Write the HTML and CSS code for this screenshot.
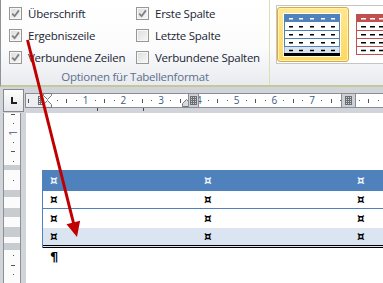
FILE: index.html
```html
<!DOCTYPE html>
<html lang="de">
<head>
    <meta charset="UTF-8">
    <meta name="viewport" content="width=device-width, initial-scale=1.0">
    <title>Optionen für Tabellenformat</title>
    <link rel="stylesheet" href="styles.css">
</head>
<body>
    <div class="window">
        <!-- ribbon: table style options + style gallery -->
        <div class="ribbon">
            <div class="group options">
                <div class="checks">
                    <label class="check"><span class="box"><svg viewBox="0 0 11 11"><path d="M2.2 5.6 L4.6 8.2 L8.9 2.4"/></svg></span>Überschrift</label>
                    <label class="check"><span class="box"><svg viewBox="0 0 11 11"><path d="M2.2 5.6 L4.6 8.2 L8.9 2.4"/></svg></span>Erste Spalte</label>
                    <label class="check"><span class="box"><svg viewBox="0 0 11 11"><path d="M2.2 5.6 L4.6 8.2 L8.9 2.4"/></svg></span>Ergebniszeile</label>
                    <label class="check"><span class="box"></span>Letzte Spalte</label>
                    <label class="check"><span class="box"><svg viewBox="0 0 11 11"><path d="M2.2 5.6 L4.6 8.2 L8.9 2.4"/></svg></span>Verbundene Zeilen</label>
                    <label class="check"><span class="box"></span>Verbundene Spalten</label>
                </div>
                <div class="group-label">Optionen für Tabellenformat</div>
            </div>
            <div class="group styles">
                <div class="gallery">
                    <div class="style-item selected">
                        <svg class="tstyle" width="56" height="42" viewBox="0 0 56 42">
                            <rect x="0.5" y="0.5" width="55" height="41" fill="#fff" stroke="#4f81bd"/>
                            <rect x="0" y="0" width="56" height="8" fill="#4f81bd"/>
                            <rect x="0.5" y="33" width="55" height="6" fill="#dbe5f1"/>
                            <rect x="0" y="39" width="56" height="3" fill="#000"/>
                            <path d="M0 16.5H56M0 24.5H56M0 32.5H56" stroke="#4f81bd"/>
                            <path d="M5 4.8h4M15 4.8h4M26 4.8h4M37 4.8h4M47 4.8h4" stroke="#fff" stroke-width="1.5"/>
                            <path d="M5 12.7h4M15 12.7h4M26 12.7h4M37 12.7h4M47 12.7h4M5 20.7h4M15 20.7h4M26 20.7h4M37 20.7h4M47 20.7h4M5 28.7h4M15 28.7h4M26 28.7h4M37 28.7h4M47 28.7h4M5 36.5h4M15 36.5h4M26 36.5h4M37 36.5h4M47 36.5h4" stroke="#000" stroke-width="1.6"/>
                        </svg>
                    </div>
                    <div class="style-item">
                        <svg class="tstyle" width="56" height="42" viewBox="0 0 56 42">
                            <rect x="0.5" y="0.5" width="55" height="40" fill="#fff" stroke="#c0504d"/>
                            <rect x="0" y="0" width="56" height="8" fill="#c0504d"/>
                            <path d="M0 16.5H56M0 24.5H56M0 32.5H56" stroke="#c0504d"/>
                            <path d="M5 4.8h5M14 4.8h5M23 4.8h5M32 4.8h5M41 4.8h5" stroke="#fff" stroke-width="1.5"/>
                            <path d="M5 12.7h5M14 12.7h5M23 12.7h5M32 12.7h5M41 12.7h5M5 20.7h5M14 20.7h5M23 20.7h5M32 20.7h5M41 20.7h5M5 28.7h5M14 28.7h5M23 28.7h5M32 28.7h5M41 28.7h5M5 36.5h5M14 36.5h5M23 36.5h5M32 36.5h5M41 36.5h5" stroke="#000" stroke-width="1.6"/>
                        </svg>
                    </div>
                </div>
            </div>
        </div>

        <!-- horizontal ruler -->
        <div class="ruler-bar">
            <div class="tab-box"><span class="tab-l"></span></div>
            <div class="hruler">
                <div class="hmargin"><span class="half"></span><span class="grid small"></span></div>
                <div class="scale">
                    <span class="t"></span><span class="t dot"></span><span class="t half"></span><span class="t dot"></span>
                    <span class="t">1</span><span class="t dot"></span><span class="t half"></span><span class="t dot"></span>
                    <span class="t">2</span><span class="t dot"></span><span class="t half"></span><span class="t dot"></span>
                    <span class="t">3</span><span class="t dot"></span><span class="t half"></span><span class="t dot"></span>
                    <span class="t">4</span><span class="t dot"></span><span class="t half"></span><span class="t dot"></span>
                    <span class="t">5</span><span class="t dot"></span><span class="t half"></span><span class="t dot"></span>
                    <span class="t">6</span><span class="t dot"></span><span class="t half"></span><span class="t dot"></span>
                    <span class="t">7</span><span class="t dot"></span><span class="t half"></span><span class="t dot"></span>
                    <span class="t">8</span><span class="t dot"></span><span class="t half"></span><span class="t dot"></span>
                </div>
                <svg class="indent" width="9" height="15" viewBox="0 0 9 15">
                    <path d="M0.5 0.5H8.5V2.5L4.5 6.5L0.5 2.5Z M4.5 7.5L8.5 11.5V14.5H0.5V11.5Z" fill="#f4f4f4" stroke="#77797c"/>
                </svg>
                <svg class="rindent" width="9" height="8" viewBox="0 0 9 8">
                    <path d="M0.5 4.5L4.5 0.5L8.5 4.5V7.5H0.5Z" fill="#d9dbde" stroke="#77797c"/>
                </svg>
                <div class="colmark first"><span class="grid"></span></div>
                <div class="colmark second"><span class="grid"></span></div>
            </div>
            <span class="tabstop one"></span>
            <span class="tabstop two"></span>
        </div>

        <!-- document: vertical ruler + page -->
        <div class="doc">
            <div class="vruler">
                <div class="vticks">
                    <span class="v dash"></span><span class="v dot"></span><span class="v num"><i>1</i></span><span class="v dot"></span>
                    <span class="v dash"></span><span class="v dot"></span><span class="v"></span><span class="v dot"></span>
                    <span class="v"></span><span class="v"></span><span class="v"></span><span class="v"></span>
                    <span class="v"></span><span class="v"></span><span class="v"></span><span class="v dot"></span>
                    <span class="v dash"></span><span class="v dot"></span>
                </div>
            </div>
            <div class="page">
                <div class="tbl">
                    <div class="trow head"><span class="cell">¤</span><span class="cell">¤</span><span class="cell">¤</span></div>
                    <div class="trow r1"><span class="cell">¤</span><span class="cell">¤</span><span class="cell">¤</span></div>
                    <div class="trow r2"><span class="cell">¤</span><span class="cell">¤</span><span class="cell">¤</span></div>
                    <div class="trow r3"><span class="cell">¤</span><span class="cell">¤</span><span class="cell">¤</span></div>
                </div>
                <p class="para">¶</p>
            </div>
        </div>

        <!-- annotation arrow drawn over the screenshot -->
        <svg class="arrow" width="383" height="283" viewBox="0 0 383 283">
            <line x1="27.5" y1="40" x2="74" y2="225" stroke="#c00000" stroke-width="3"/>
            <polygon points="66.5,224.2 80.1,220.7 77,237" fill="#c00000"/>
        </svg>
    </div>
</body>
</html>
```

FILE: styles.css
```css
body {
    margin: 0;
    font-family: "Segoe UI", "Open Sans", sans-serif;
    background-color: #d1d5da;
}

.window {
    position: relative;
    width: 383px;
    height: 283px;
    overflow: hidden;
    background-color: #d1d5da;
}

/* ribbon */

.ribbon {
    display: flex;
    height: 85px;
    background: linear-gradient(#ffffff, #fcfcfd 55%, #e8ebef);
    border-left: 1px solid #8f9296;
    border-bottom: 2px solid #c6c79b;
}

.options {
    width: 268px;
    border-right: 1px solid #dcdfae;
    display: flex;
    flex-direction: column;
}

.checks {
    display: grid;
    grid-template-columns: 127px auto;
    grid-auto-rows: 22px;
    padding: 2px 0 0 8px;
}

.check {
    display: flex;
    align-items: center;
    gap: 6px;
    font-size: 11.5px;
    letter-spacing: -0.25px;
    color: #1b2533;
    white-space: nowrap;
}

.box {
    box-sizing: border-box;
    width: 13px;
    height: 13px;
    border: 1px solid #979797;
    background: linear-gradient(135deg, #dcdcdc, #f8f8f8);
    box-shadow: inset 0 0 0 1px #f7f7f7;
    display: flex;
    align-items: center;
    justify-content: center;
}

.box svg {
    width: 11px;
    height: 11px;
}

.box path {
    fill: none;
    stroke: #808080;
    stroke-width: 1.8;
}

.group-label {
    margin-top: auto;
    height: 17px;
    line-height: 17px;
    text-align: center;
    font-size: 11.5px;
    letter-spacing: -0.25px;
    color: #5d6f8b;
}

.styles {
    flex: 1;
    padding: 5px 0 0 6px;
    overflow: hidden;
}

.gallery {
    display: flex;
    padding: 1px 0;
    border: 1px solid #c5c5c5;
    border-right: none;
    background-color: #fff;
}

.style-item {
    flex: none;
    padding: 5px 7px 4px 5px;
    border: 1px solid transparent;
    border-radius: 3px;
}

.style-item.selected {
    border-color: #d9a945;
    background: linear-gradient(#ffe88d, #ffd95e);
    box-shadow: inset 0 0 0 1px #fff2b8;
}

.tstyle {
    display: block;
    border: 1px solid #fff;
}

/* horizontal ruler */

.ruler-bar {
    position: relative;
    display: flex;
    height: 26px;
    padding-left: 3px;
}

.tab-box {
    width: 21px;
    height: 21px;
    margin-top: 2px;
    border: 1px solid #868a90;
    background: linear-gradient(#fdfdfd, #e6e8eb);
    display: flex;
    align-items: center;
    justify-content: center;
}

.tab-l {
    width: 4px;
    height: 5px;
    border-left: 2px solid #1f1f1f;
    border-bottom: 2px solid #1f1f1f;
}

.hruler {
    position: relative;
    flex: 1;
    height: 13px;
    margin: 6px 0 0 1px;
    border: 1px solid #8a8e94;
    border-right: none;
    background-color: #fff;
    display: flex;
}

.hmargin {
    width: 17px;
    flex: none;
    display: flex;
    align-items: center;
    padding-left: 2px;
    box-sizing: border-box;
    background-color: #eceef1;
}

.hmargin .half {
    width: 1px;
    height: 4px;
    background-color: #555;
}

.scale {
    display: flex;
}

.t {
    width: 9.45px;
    flex: none;
    display: flex;
    align-items: center;
    justify-content: center;
    font-family: "Segoe UI", "Open Sans", sans-serif;
    font-size: 10px;
    line-height: 13px;
    color: #3f5a7e;
}

.t.dot::before,
.t.half::before {
    content: "";
    width: 1px;
    height: 1px;
    background-color: #555;
}

.t.half::before {
    height: 4px;
}

.grid {
    display: block;
    width: 7px;
    height: 9px;
    background-image:
        linear-gradient(90deg, #6b6e73 1px, transparent 1px),
        linear-gradient(#6b6e73 1px, transparent 1px);
    background-size: 2px 2px;
}

.grid.small {
    width: 5px;
    margin-left: 9px;
}

.indent {
    position: absolute;
    left: 17px;
    top: -1px;
}

.rindent {
    position: absolute;
    left: 156px;
    bottom: 0;
}

.colmark {
    position: absolute;
    top: 0;
    height: 13px;
    box-sizing: border-box;
    border-left: 1px solid #8a8e94;
    border-right: 1px solid #8a8e94;
    background-color: #cdd1d6;
    display: flex;
    align-items: center;
    justify-content: center;
}

.colmark.first {
    left: 162px;
    width: 11px;
}

.colmark.second {
    left: 315px;
    width: 15px;
}

.tabstop {
    position: absolute;
    top: 21px;
    width: 1px;
    height: 3px;
    background-color: #4a4a4a;
}

.tabstop.one {
    left: 97px;
}

.tabstop.two {
    left: 143px;
}

/* document area */

.doc {
    display: flex;
    height: 170px;
    padding-left: 3px;
}

.vruler {
    width: 16px;
    flex: none;
    margin-right: 5px;
    border-left: 1px solid #8d9196;
    border-right: 1px solid #8d9196;
    overflow: hidden;
    background: linear-gradient(to bottom,
        #fbfbfb 0 52px, #c8ccd1 52px 57px,
        #fbfbfb 57px 77px, #c8ccd1 77px 84px,
        #fbfbfb 84px 95px, #c8ccd1 95px 104px,
        #fbfbfb 104px 114px, #c8ccd1 114px 124px,
        #fbfbfb 124px 130px, #c8ccd1 130px 137px,
        #fbfbfb 137px);
}

.vticks {
    display: flex;
    flex-direction: column;
    margin-top: -3.7px;
    padding-left: 2px;
}

.v {
    height: 9.45px;
    flex: none;
    display: flex;
    align-items: center;
    justify-content: center;
}

.v.dot::before,
.v.dash::before {
    content: "";
    width: 1px;
    height: 1px;
    background-color: #555;
}

.v.dash::before {
    width: 4px;
}

.v.num i {
    font-style: normal;
    font-size: 10px;
    line-height: 10px;
    color: #3f5a7e;
    transform: rotate(-90deg);
}

.page {
    flex: 1;
    background-color: #fff;
    overflow: hidden;
}

.tbl {
    width: 462px;
    margin: 57px 0 0 16px;
    border-left: 1px solid #4f81bd;
}

.trow {
    display: grid;
    grid-template-columns: 154px 153px 155px;
}

.cell {
    display: flex;
    align-items: center;
    padding-left: 7px;
    font-family: "DejaVu Sans", sans-serif;
    font-weight: bold;
    font-size: 12px;
    line-height: 14px;
    color: #000;
}

.trow.head {
    height: 21px;
    background-color: #4f81bd;
}

.trow.head .cell {
    color: #eef3fb;
}

.trow.r1 {
    height: 17px;
    border-bottom: 1px solid #4f81bd;
}

.trow.r2 {
    height: 19px;
}

.trow.r3 {
    height: 17px;
    background-color: #dbe5f1;
    border-bottom: 3px double #000;
}

.para {
    margin: 0 0 0 24px;
    font-family: "DejaVu Sans", sans-serif;
    font-weight: bold;
    font-size: 13px;
    line-height: 18px;
    color: #000;
}

/* red annotation arrow */

.arrow {
    position: absolute;
    left: 0;
    top: 0;
    pointer-events: none;
}
```
